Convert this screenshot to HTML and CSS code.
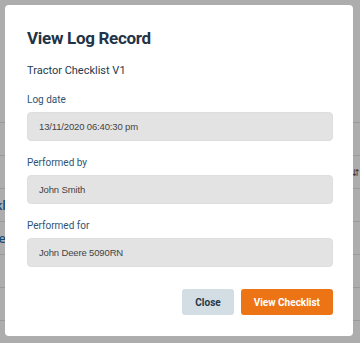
FILE: index.html
```html
<!DOCTYPE html>
<html lang="en">
<head>
<meta charset="utf-8">
<title>View Log Record</title>
<link rel="stylesheet" href="styles.css">
</head>
<body>
<div class="page">
  <div class="table">
    <div class="row"><span class="cell"></span></div>
    <div class="row"><span class="cell"></span></div>
    <div class="row"><span class="cell"></span><span class="sort">&#8693;</span></div>
    <div class="row"><span class="cell link">Checkl</span></div>
    <div class="row"><span class="cell link">Vehicle</span></div>
    <div class="row"><span class="cell"></span></div>
    <div class="row"><span class="cell"></span></div>
  </div>
</div>
<div class="overlay">
  <div class="modal" role="dialog" aria-labelledby="modal-title">
    <h1 class="modal-title" id="modal-title">View Log Record</h1>
    <p class="modal-subtitle">Tractor Checklist V1</p>
    <div class="field">
      <label class="field-label">Log date</label>
      <div class="field-value">13/11/2020 06:40:30 pm</div>
    </div>
    <div class="field">
      <label class="field-label">Performed by</label>
      <div class="field-value">John Smith</div>
    </div>
    <div class="field">
      <label class="field-label">Performed for</label>
      <div class="field-value">John Deere 5090RN</div>
    </div>
    <div class="actions">
      <button class="btn btn-secondary" type="button">Close</button>
      <button class="btn btn-primary" type="button">View Checklist</button>
    </div>
  </div>
</div>
</body>
</html>
```
FILE: styles.css
```css
* { box-sizing: border-box; }
html, body { margin: 0; padding: 0; }
body {
  width: 360px;
  height: 343px;
  overflow: hidden;
  background: #ffffff;
  font-family: Roboto, "Liberation Sans", sans-serif;
}
.page {
  padding-top: 90px;
  width: 360px;
}
.table { display: flex; flex-direction: column; }
.row {
  height: 33px;
  border-bottom: 1px solid #e4e4e4;
  display: flex;
  align-items: center;
  justify-content: space-between;
  font-family: "Open Sans", sans-serif;
  font-size: 13px;
}
.cell {
  white-space: nowrap;
  width: 60px;
  margin-left: -54px;
  text-align: right;
}
.link { color: #1f6fb2; font-weight: 600; }
.sort { color: #555; font-size: 9px; margin-right: 0; }

.overlay {
  position: fixed;
  inset: 0;
  background: rgba(0, 0, 0, 0.32);
}
.modal {
  position: absolute;
  left: 5px;
  top: 5px;
  width: 348px;
  height: 331px;
  background: #ffffff;
  border-radius: 4px;
  padding: 22px 20px 21px 22px;
  display: flex;
  flex-direction: column;
}
.modal-title {
  margin: 0;
  font-family: Roboto, sans-serif;
  font-size: 17px;
  letter-spacing: -0.3px;
  line-height: 22px;
  font-weight: 700;
  color: #1f3448;
}
.modal-subtitle {
  margin: 14px 0 0 0;
  font-family: Roboto, sans-serif;
  font-size: 11px;
  line-height: 16px;
  color: #233a4d;
}
.field {
  display: flex;
  flex-direction: column;
  gap: 4px;
  margin-top: 13px;
}
.field + .field { margin-top: 14px; }
.field-label {
  font-family: Roboto, sans-serif;
  font-size: 10px;
  line-height: 16px;
  color: #2e5574;
}
.field-value {
  height: 29px;
  display: flex;
  align-items: center;
  padding: 0 11px;
  background: #e3e3e3;
  border: 1px solid #dedede;
  border-radius: 4px;
  font-family: "Liberation Sans", Arial, sans-serif;
  font-size: 9.5px;
  letter-spacing: -0.15px;
  color: #444444;
}
.actions {
  display: flex;
  justify-content: flex-end;
  gap: 7px;
  margin-top: 22px;
}
.btn {
  height: 26px;
  border: none;
  border-radius: 3px;
  padding: 0 13px;
  font-family: Roboto, sans-serif;
  font-size: 10px;
  font-weight: 700;
  cursor: pointer;
}
.btn-secondary { background: #d3dde4; color: #263848; }
.btn-primary { background: #ec7414; color: #ffffff; }
```
